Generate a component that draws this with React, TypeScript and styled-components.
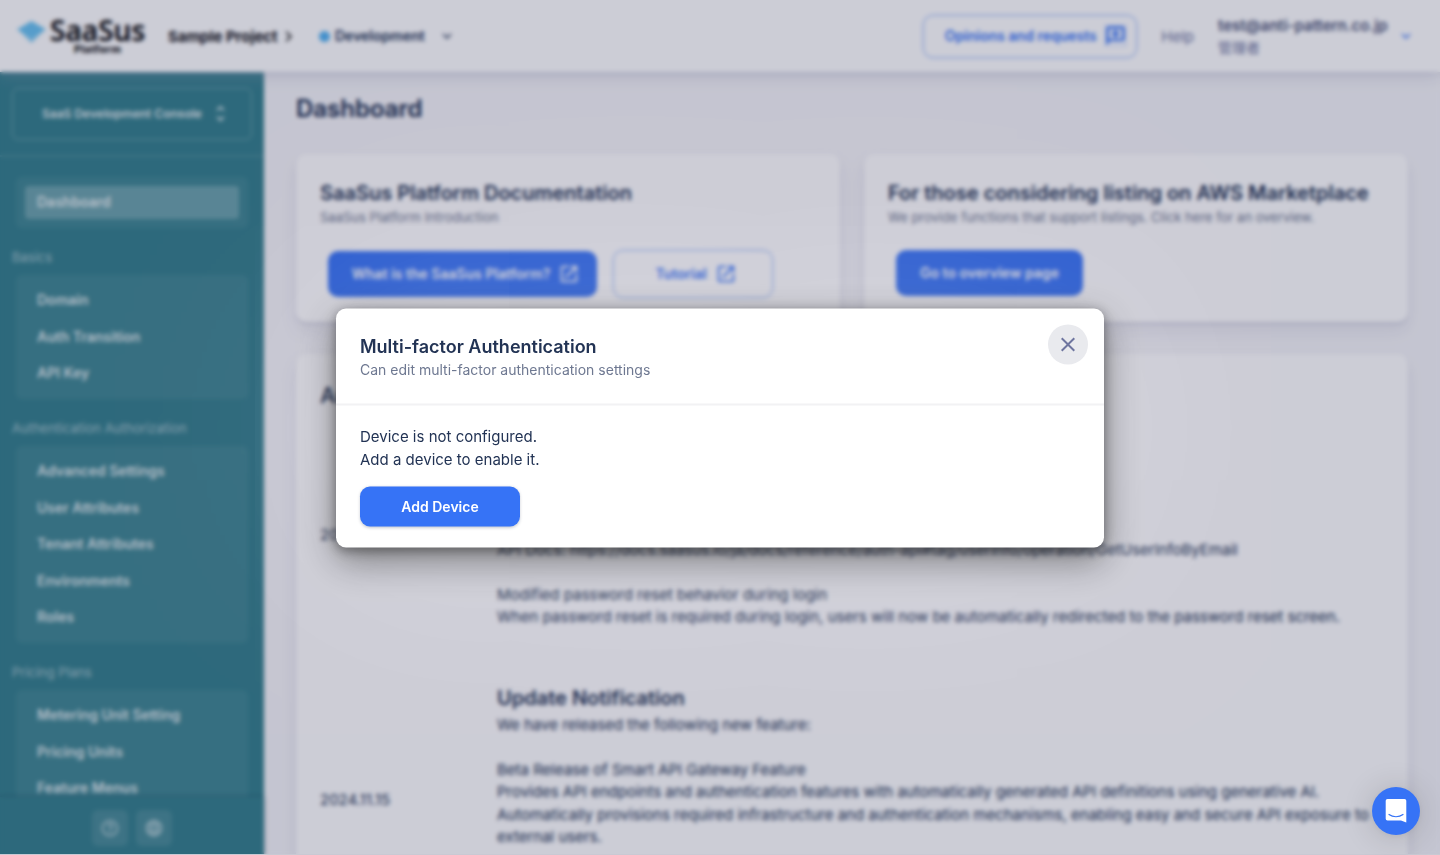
import React from 'react';
import styled, { createGlobalStyle } from 'styled-components';
import { MdOpenInNew, MdHelpOutline, MdLanguage, MdUnfoldMore, MdExpandMore, MdKeyboardArrowRight, MdClose, MdOutlineReviews } from 'react-icons/md';

const GlobalStyle = createGlobalStyle`
  *, *::before, *::after { box-sizing: border-box; }
  html, body { margin: 0; height: 100%; overflow: hidden; }
  body {
    font-family: Inter, "Noto Sans CJK JP", sans-serif;
    font-size: 14px;
    color: #223354;
    background: #f6f6f9;
    -webkit-font-smoothing: antialiased;
  }
  #root { height: 100vh; }
  h1, h2, h3, p { margin: 0; }
  button { font-family: inherit; cursor: pointer; }
`;

const Shell = styled.div`
  height: 100vh;
  display: flex;
  flex-direction: column;
  overflow: hidden;
`;

const Header = styled.header`
  flex: none;
  height: 72px;
  display: flex;
  align-items: center;
  padding: 0 25px 0 17px;
  background: #fff;
  box-shadow: 0 2px 3px rgba(159, 162, 191, 0.18), 0 4px 16px rgba(159, 162, 191, 0.32);
  z-index: 2;
`;

const Logo = styled.div`
  display: flex;
  width: 151px;
  color: #18181b;
`;

const LogoMark = styled.svg`
  flex: none;
  margin: 4px 4px 0 0;
`;

const LogoText = styled.div`
  display: flex;
  flex-direction: column;
  align-items: center;
`;

const LogoName = styled.span`
  height: 27px;
  font: 600 28px/27px "Noto Sans", sans-serif;
  -webkit-text-stroke: 0.4px currentColor;
`;

const LogoSub = styled.span`
  font: 800 10.5px/11px Inter, sans-serif;
  letter-spacing: 0.35px;
`;

const ProjectName = styled.span`
  width: 110px;
  font-size: 15px;
  font-weight: 700;
  letter-spacing: -0.05px;
  white-space: nowrap;
  color: #111118;
`;

const ProjectArrow = styled(MdKeyboardArrowRight)`
  margin-right: 20px;
  color: #222;
`;

const EnvDot = styled.span`
  width: 11px;
  height: 11px;
  margin-right: 5px;
  border-radius: 50%;
  background: #57b4f2;
`;

const EnvName = styled.span`
  width: 90px;
  padding-bottom: 1px;
  font-weight: 600;
`;

const EnvArrow = styled(MdExpandMore)`
  margin-left: 13px;
`;

const Spacer = styled.div`
  flex: 1;
`;

const OutlineButton = styled.button<{ $w: number; $h: number; $shift: number }>`
  display: flex;
  align-items: center;
  justify-content: center;
  gap: 8px;
  width: ${p => p.$w}px;
  height: ${p => p.$h}px;
  padding: 0 0 1px ${p => p.$shift}px;
  border: 1.5px solid #a9c4fb;
  border-radius: 10px;
  background: transparent;
  color: #3673f6;
  font-size: 14px;
  font-weight: 600;
  box-shadow: 0 0 0 0.5px #bcd1fb;
`;

const FeedbackIcon = styled(MdOutlineReviews)`
  stroke: currentColor;
  stroke-width: 0.7px;
`;

const HelpLink = styled.span`
  margin: 0 24px;
  font-size: 15px;
  color: #6e759f;
`;

const User = styled.div`
  width: 170px;
  padding-top: 2px;
  line-height: 22px;
`;

const UserMail = styled.div`
  font-size: 15px;
  font-weight: 600;
  color: #4b5378;
`;

const UserRole = styled.div`
  color: #6e759f;
`;

const UserArrow = styled(MdExpandMore)`
  margin-left: 9px;
  color: #3673f6;
`;

const Body = styled.div`
  flex: 1;
  min-height: 0;
  display: flex;
`;

const Sidebar = styled.aside`
  flex: none;
  width: 264px;
  display: flex;
  flex-direction: column;
  background: #39838f;
  color: #fff;
  z-index: 1;
`;

const ConsoleArea = styled.div`
  flex: none;
  height: 85px;
  padding: 16px 12px 0;
  border-bottom: 2px solid rgba(255, 255, 255, 0.1);
`;

const ConsoleSwitch = styled.div`
  height: 52px;
  display: flex;
  align-items: center;
  justify-content: center;
  gap: 8px;
  padding: 0 0 1px 9px;
  border: 1px solid rgba(255, 255, 255, 0.28);
  border-radius: 6px;
  font-size: 12px;
  font-weight: 600;
  color: rgba(255, 255, 255, 0.88);
`;

const Nav = styled.nav`
  flex: 1;
  min-height: 0;
  overflow: hidden;
  padding: 20px 16px 0;
`;

const NavHeading = styled.h3`
  height: 47px;
  margin-left: -4px;
  padding-top: 18px;
  font-size: 13px;
  line-height: 22px;
  font-weight: 400;
  color: rgba(255, 255, 255, 0.56);
`;

const NavGroup = styled.div`
  display: flex;
  flex-direction: column;
  gap: 3.5px;
  padding: 9px;
  border-radius: 6px;
  background: rgba(255, 255, 255, 0.06);
`;

const NavItem = styled.div<{ $active?: boolean }>`
  height: 33px;
  padding: 0 12px;
  border-radius: 4px;
  line-height: 32px;
  font-size: 14px;
  font-weight: 600;
  color: rgba(255, 255, 255, 0.86);
  background: ${p => (p.$active ? 'rgba(255, 255, 255, 0.24)' : 'transparent')};
`;

const SideFooter = styled.div`
  flex: none;
  height: 58px;
  display: flex;
  align-items: center;
  justify-content: center;
  gap: 8px;
  padding-top: 4px;
  background: #39838f;
  box-shadow: 0 0 4px rgba(0, 20, 50, 0.35);
`;

const SideButton = styled.div`
  width: 36px;
  height: 36px;
  display: grid;
  place-items: center;
  border-radius: 6px;
  background: rgba(255, 255, 255, 0.1);
  color: rgba(255, 255, 255, 0.6);
`;

const Main = styled.main`
  flex: 1;
  min-width: 0;
  overflow: hidden;
  padding: 21px 32px 0;
`;

const PageTitle = styled.h1`
  height: 61px;
  font-size: 24px;
  line-height: 32px;
  font-weight: 600;
  -webkit-text-stroke: 0.2px currentColor;
`;

const CardRow = styled.div`
  display: grid;
  grid-template-columns: 1fr 1fr;
  gap: 24px;
  margin-bottom: 32px;
`;

const Card = styled.section<{ $h: number }>`
  height: ${p => p.$h}px;
  padding: 25px 24px;
  border-radius: 10px;
  background: #fff;
  box-shadow: 0 9px 16px rgba(159, 162, 191, 0.18), 0 2px 2px rgba(159, 162, 191, 0.32);
`;

const CardTitle = styled.h2`
  font-size: 20px;
  line-height: 28px;
  font-weight: 600;
`;

const CardText = styled.p`
  font-size: 13px;
  line-height: 20px;
  color: #6e7891;
`;

const CardActions = styled.div<{ $h: number }>`
  display: flex;
  align-items: center;
  gap: 15.5px;
  height: ${p => p.$h}px;
  margin: 22px 8px 0;
`;

const PrimaryButton = styled.button<{ $w: number; $h: number; $shift?: number }>`
  display: flex;
  align-items: center;
  justify-content: center;
  gap: 8px;
  width: ${p => p.$w}px;
  height: ${p => p.$h}px;
  padding: 0 0 1px ${p => p.$shift ?? 0}px;
  border: 0;
  border-radius: 10px;
  background: #3673f6;
  color: #fff;
  font-size: 14px;
  font-weight: 600;
`;

const NewsTitle = styled.h2`
  margin-top: 1px;
  font-size: 22px;
  line-height: 30px;
  font-weight: 600;
`;

const NewsRow = styled.article<{ $h: number; $bottom?: boolean }>`
  display: grid;
  grid-template-columns: 177px 1fr;
  height: ${p => p.$h}px;
  margin-bottom: 55px;
  align-items: ${p => (p.$bottom ? 'end' : 'start')};
  font-size: 15px;
  line-height: 22.4px;
`;

const NewsDate = styled.time<{ $y: number }>`
  align-self: start;
  padding-top: ${p => p.$y}px;
`;

const NewsBody = styled.div`
  margin-bottom: -0.6px;
  white-space: pre-line;
`;

const NewsHeading = styled.h3`
  font-size: 20px;
  line-height: 31px;
  font-weight: 600;
`;

const Backdrop = styled.div`
  position: fixed;
  inset: 0;
  z-index: 10;
  display: flex;
  align-items: center;
  justify-content: center;
  background: rgba(0, 7, 52, 0.2);
  backdrop-filter: blur(2px);
  border-bottom: 1px solid #c9c9d3;
`;

const Dialog = styled.div`
  width: 768px;
  height: 239px;
  transform: translateY(0.5px);
  border-radius: 10px;
  background: #fff;
  box-shadow: 0 0 14rem rgba(255, 255, 255, 0.26), 0 0.8rem 2.3rem rgba(0, 0, 0, 0.44), 0 0.2rem 0.7rem rgba(0, 0, 0, 0.42);
`;

const DialogHeader = styled.header`
  display: flex;
  justify-content: space-between;
  height: 97.5px;
  padding: 16px 16px 0 24px;
  border-bottom: 2px solid #f2f2f4;
`;

const DialogTitle = styled.h2`
  margin-top: 10px;
  font-size: 18px;
  line-height: 24px;
  font-weight: 600;
`;

const DialogSub = styled.p`
  font-size: 14px;
  line-height: 22px;
  color: #6e7891;
`;

const CloseButton = styled.button`
  width: 40px;
  height: 40px;
  padding: 0;
  display: grid;
  place-items: center;
  border: 0;
  border-radius: 50%;
  background: #e9eaee;
  color: #6e759f;
`;

const DialogBody = styled.div`
  padding: 18.5px 24px 0;
  font-size: 15px;
  line-height: 23px;
`;

const AddButton = styled(PrimaryButton)`
  margin-top: 16px;
  box-shadow: 0 1px 3px rgba(34, 51, 84, 0.25);
`;

const ChatLauncher = styled.div`
  position: fixed;
  right: 20px;
  bottom: 20px;
  z-index: 20;
  width: 48px;
  height: 48px;
  display: grid;
  place-items: center;
  border-radius: 50%;
  background: #3673f6;
  box-shadow: 0 1px 6px rgba(0, 0, 0, 0.06), 0 2px 32px rgba(0, 0, 0, 0.16);
`;

const navSections = [
  { heading: 'Basics', items: ['Domain', 'Auth Transition', 'API Key'] },
  { heading: 'Authentication Authorization', items: ['Advanced Settings', 'User Attributes', 'Tenant Attributes', 'Environments', 'Roles'] },
  { heading: 'Pricing Plans', items: ['Metering Unit Setting', 'Pricing Units', 'Feature Menus'] },
];

function TopBar() {
  return (
    <Header>
      <Logo>
        <LogoMark width="29" height="22" viewBox="0 0 29 22">
          <path d="M14.5 0 29 8.500 14.500 18 0 8.500Z" fill="#6cc4f2" />
          <path d="M3 10.500 14.500 18 26 10.500 14.500 22Z" fill="#8fd0f3" />
        </LogoMark>
        <LogoText>
          <LogoName>SaaSus</LogoName>
          <LogoSub>Platform</LogoSub>
        </LogoText>
      </Logo>
      <ProjectName>Sample Project</ProjectName>
      <ProjectArrow size={21} />
      <EnvDot />
      <EnvName>Development</EnvName>
      <EnvArrow size={18} />
      <Spacer />
      <OutlineButton $w={214} $h={43} $shift={10}>
        Opinions and requests
        <FeedbackIcon size={21} />
      </OutlineButton>
      <HelpLink>Help</HelpLink>
      <User>
        <UserMail>test@anti-pattern.co.jp</UserMail>
        <UserRole>管理者</UserRole>
      </User>
      <UserArrow size={18} />
    </Header>
  );
}

function SideMenu() {
  return (
    <Sidebar>
      <ConsoleArea>
        <ConsoleSwitch>
          SaaS Development Console
          <MdUnfoldMore size={21} />
        </ConsoleSwitch>
      </ConsoleArea>
      <Nav>
        <NavGroup>
          <NavItem $active>Dashboard</NavItem>
        </NavGroup>
        {navSections.map(section => (
          <React.Fragment key={section.heading}>
            <NavHeading>{section.heading}</NavHeading>
            <NavGroup>
              {section.items.map(item => (
                <NavItem key={item}>{item}</NavItem>
              ))}
            </NavGroup>
          </React.Fragment>
        ))}
      </Nav>
      <SideFooter>
        <SideButton><MdHelpOutline size={20} /></SideButton>
        <SideButton><MdLanguage size={20} /></SideButton>
      </SideFooter>
    </Sidebar>
  );
}

function Dashboard() {
  return (
    <Main>
      <PageTitle>Dashboard</PageTitle>
      <CardRow>
        <Card $h={168}>
          <CardTitle>SaaSus Platform Documentation</CardTitle>
          <CardText>SaaSus Platform Introduction</CardText>
          <CardActions $h={50}>
            <PrimaryButton $w={269} $h={46} $shift={7}>
              What is the SaaSus Platform?
              <MdOpenInNew size={22} />
            </PrimaryButton>
            <OutlineButton $w={160} $h={48} $shift={7}>
              Tutorial
              <MdOpenInNew size={22} />
            </OutlineButton>
          </CardActions>
        </Card>
        <Card $h={168}>
          <CardTitle>For those considering listing on AWS Marketplace</CardTitle>
          <CardText>We provide functions that support listings. Click here for an overview.</CardText>
          <CardActions $h={48}>
            <PrimaryButton $w={187} $h={46}>Go to overview page</PrimaryButton>
          </CardActions>
        </Card>
      </CardRow>
      <Card $h={560}>
        <NewsTitle>Announcements</NewsTitle>
        <NewsRow $h={218} $bottom>
          <NewsDate $y={114}>2024.12.10</NewsDate>
          <NewsBody>
            {`API Docs: https://docs.saasus.io/ja/docs/reference/auth-api#tag/userInfo/operation/GetUserInfoByEmail

            Modified password reset behavior during login
            When password reset is required during login, users will now be automatically redirected to the password reset screen.`}
          </NewsBody>
        </NewsRow>
        <NewsRow $h={230}>
          <NewsDate $y={106}>2024.11.15</NewsDate>
          <NewsBody>
            <NewsHeading>Update Notification</NewsHeading>
            {`We have released the following new feature:

            Beta Release of Smart API Gateway Feature
            Provides API endpoints and authentication features with automatically generated API definitions using generative AI.
            Automatically provisions required infrastructure and authentication mechanisms, enabling easy and secure API exposure to external users.`}
          </NewsBody>
        </NewsRow>
      </Card>
    </Main>
  );
}

export default function App() {
  return (
    <>
      <GlobalStyle />
      <Shell>
        <TopBar />
        <Body>
          <SideMenu />
          <Dashboard />
        </Body>
      </Shell>
      <Backdrop>
        <Dialog role="dialog">
          <DialogHeader>
            <div>
              <DialogTitle>Multi-factor Authentication</DialogTitle>
              <DialogSub>Can edit multi-factor authentication settings</DialogSub>
            </div>
            <CloseButton aria-label="Close"><MdClose size={24} /></CloseButton>
          </DialogHeader>
          <DialogBody>
            <p>Device is not configured.</p>
            <p>Add a device to enable it.</p>
            <AddButton $w={160} $h={40.5}>Add Device</AddButton>
          </DialogBody>
        </Dialog>
      </Backdrop>
      <ChatLauncher>
        <svg width="24" height="26" viewBox="0 0 24 26">
          <path d="M3.5 1h17A1.8 1.8 0 0 1 22.300 2.800V24.500L17 22.500H3.500A1.800 1.800 0 0 1 1.700 20.700V2.800A1.800 1.800 0 0 1 3.500 1Z" fill="#fff" />
          <path d="M5 16.500c4 3 10 3 14 0" fill="none" stroke="#3673f6" strokeWidth="1.200" strokeLinecap="round" />
        </svg>
      </ChatLauncher>
    </>
  );
}
